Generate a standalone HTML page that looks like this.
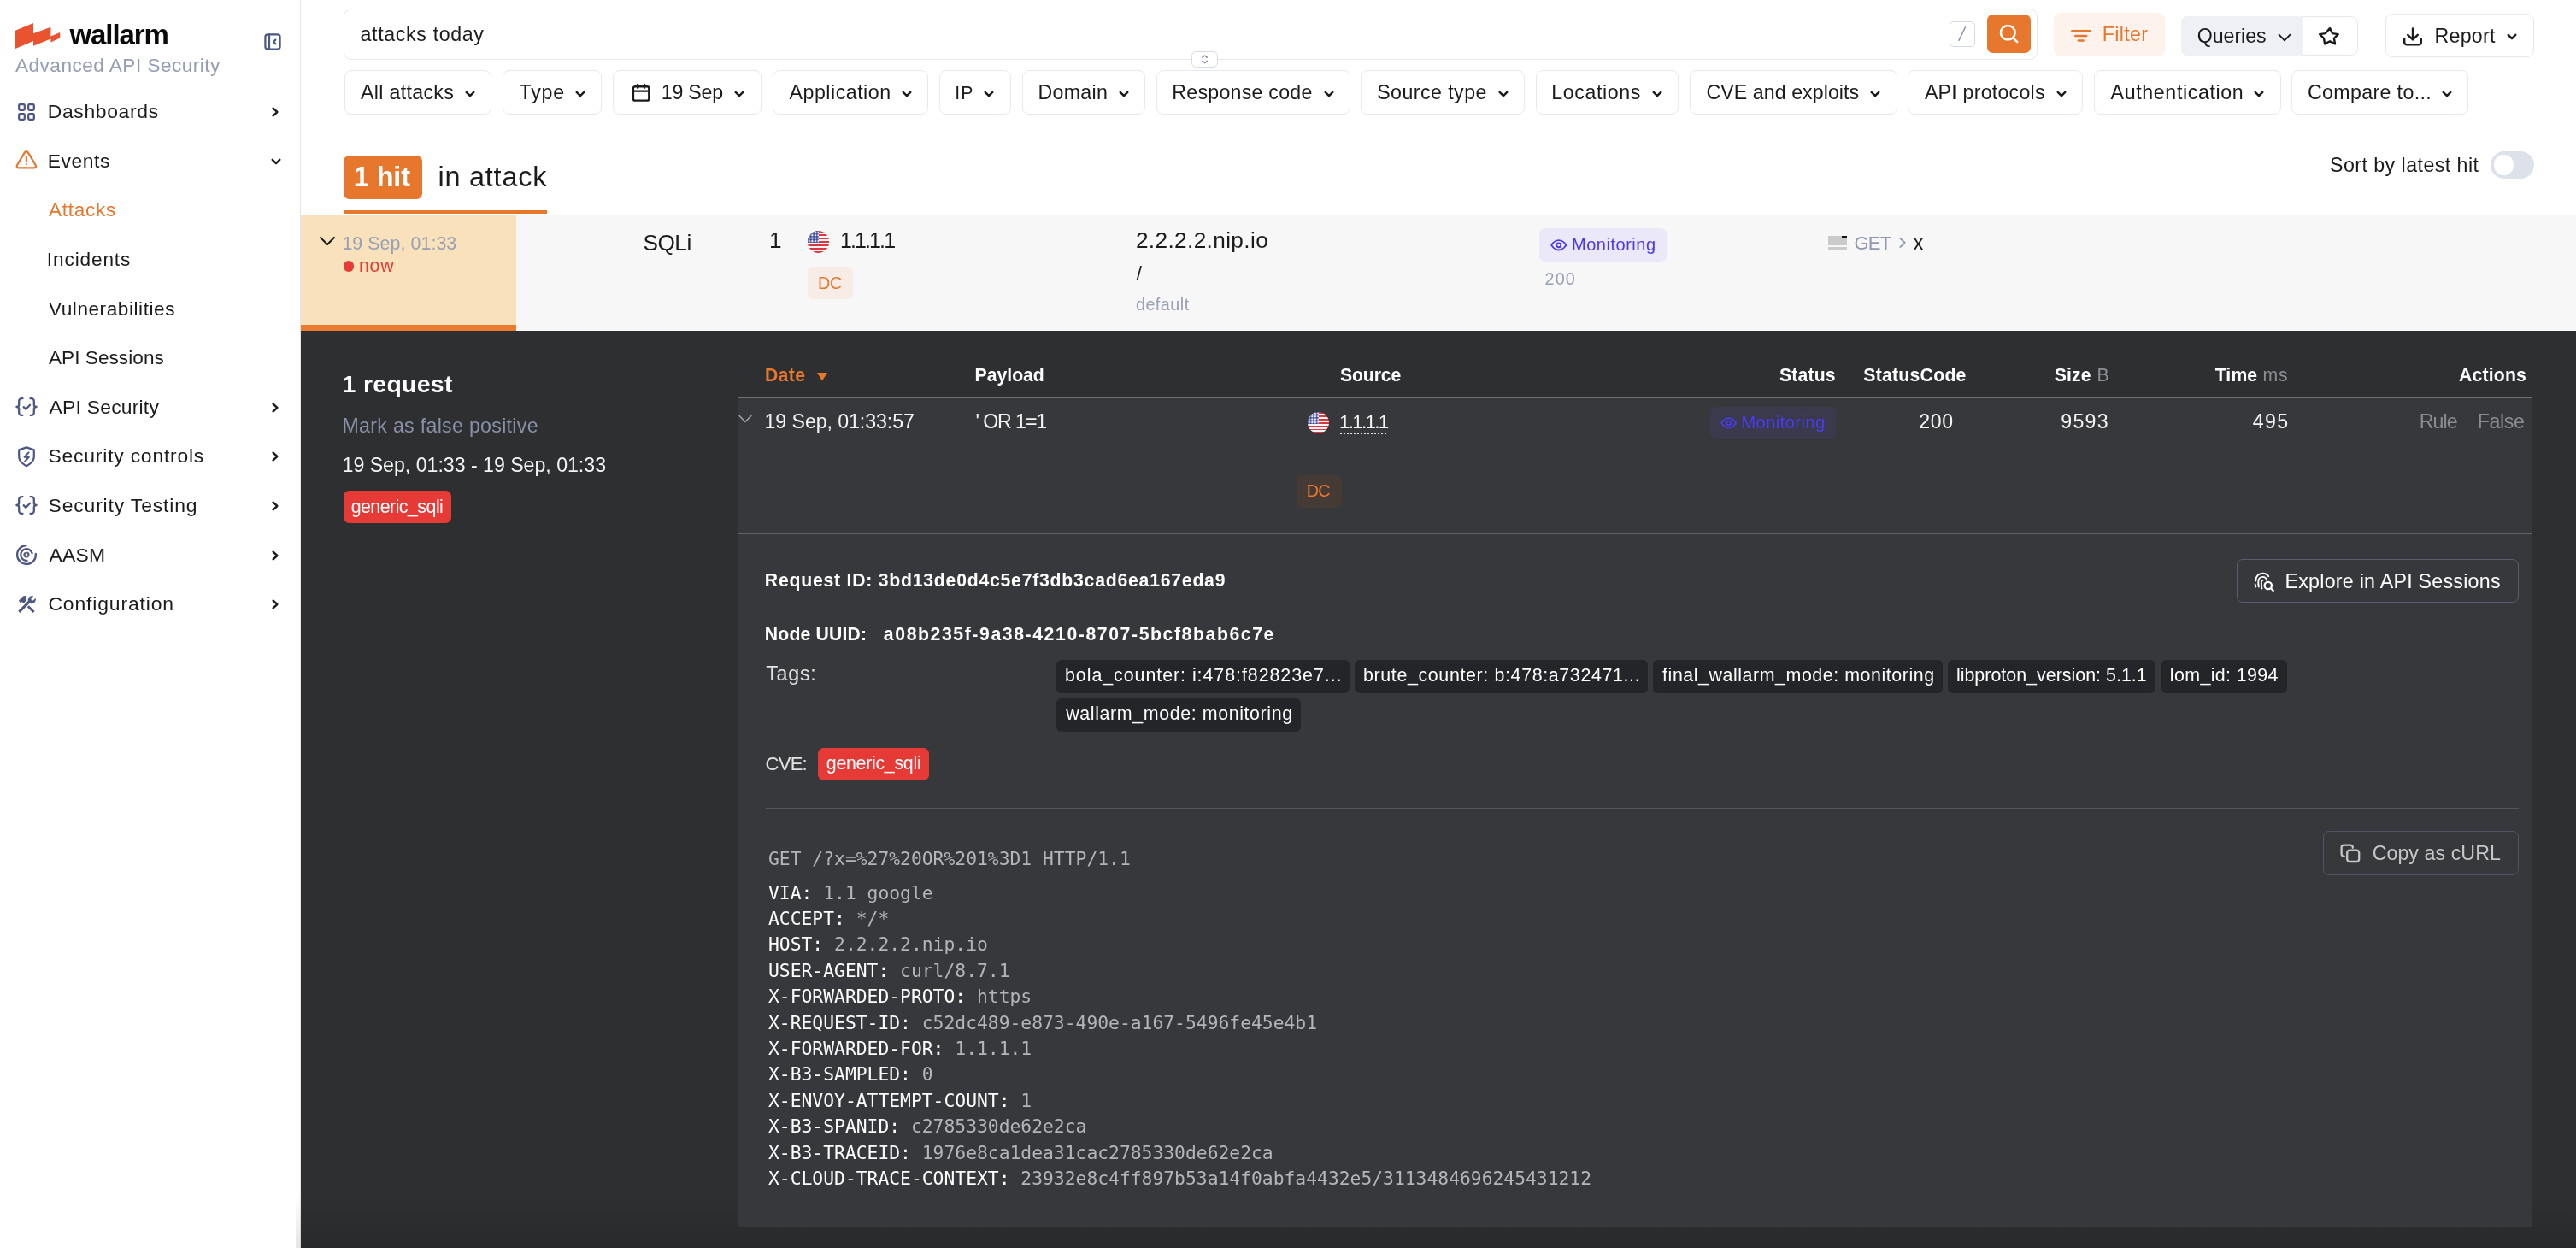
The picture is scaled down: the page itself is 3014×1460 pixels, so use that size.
<!DOCTYPE html>
<html lang="en">
<head>
<meta charset="utf-8">
<title>Wallarm - Attacks</title>
<style>
*{box-sizing:border-box;margin:0;padding:0}
html,body{width:3014px;height:1460px;overflow:hidden;background:#fff}
body{font-family:"Liberation Sans",sans-serif;color:#1d1d1f;position:relative}
#app{position:absolute;left:0;top:0;width:3014px;height:1460px;overflow:hidden;will-change:transform}
.a{position:absolute}
.t{position:absolute;white-space:nowrap}
svg{position:absolute;overflow:visible}
.ic{fill:none;stroke-linecap:round;stroke-linejoin:round}
.mono{font-family:"DejaVu Sans Mono","Liberation Mono",monospace}
</style>
</head>
<body>
<div id="app">
<!-- b_side -->
<div class="a" style="left:0.00px;top:0.00px;width:352.00px;height:1460.00px;background:#fff;border-right:1px solid #e4e5ea;"></div>
<svg style="left:0.00px;top:0.00px;" width="80.00" height="70.00" viewBox="0 0 80 70"><path fill="#e9532f" d="M18 35.8L39 27V39.2L59.4 31.7V42.6L70.2 37.9V44.6L59.4 49.4V45.6L39 53.8V48L18 56.9Z"/></svg>
<div class="t " style="top:22px;font-size:33.00px;line-height:37px;left:81.50px;letter-spacing:-1.102px;color:#0a0a0a;font-weight:bold;">wallarm</div>
<div class="t " style="top:64px;font-size:22.60px;line-height:25px;left:18.00px;letter-spacing:0.477px;color:#959db3;">Advanced API Security</div>
<svg style="left:308.00px;top:38.00px;" width="22.00" height="22.00" viewBox="0 0 22 22"><rect class="ic" x="2.4" y="2.4" width="17.2" height="17.2" rx="3" stroke="#4c5783" stroke-width="2.2"/><path class="ic" d="M7 2.4V19.6M14.4 8.6L12 11L14.4 13.4" stroke="#4c5783" stroke-width="2.2"/></svg>
<div class="t " style="top:117px;font-size:22.90px;line-height:26px;left:55.77px;letter-spacing:0.656px;color:#1b1b1d;">Dashboards</div>
<svg style="left:316.40px;top:123.10px;" width="12.00" height="16.00" viewBox="0 0 12 16"><path class="ic" d="M3.60 3.60L8.40 8L3.60 12.40" stroke="#1d1d1f" stroke-width="2.40"/></svg>
<div class="t " style="top:175px;font-size:22.90px;line-height:26px;left:55.77px;letter-spacing:0.535px;color:#1b1b1d;">Events</div>
<svg style="left:314.80px;top:182.50px;" width="16.00" height="12.00" viewBox="0 0 16 12"><path class="ic" d="M3.70 3.80L8 8.20L12.30 3.80" stroke="#1d1d1f" stroke-width="2.40"/></svg>
<div class="t " style="top:463px;font-size:22.90px;line-height:26px;left:57.60px;letter-spacing:0.214px;color:#1b1b1d;">API Security</div>
<svg style="left:316.40px;top:468.70px;" width="12.00" height="16.00" viewBox="0 0 12 16"><path class="ic" d="M3.60 3.60L8.40 8L3.60 12.40" stroke="#1d1d1f" stroke-width="2.40"/></svg>
<div class="t " style="top:520px;font-size:22.90px;line-height:26px;left:56.57px;letter-spacing:0.781px;color:#1b1b1d;">Security controls</div>
<svg style="left:316.40px;top:526.30px;" width="12.00" height="16.00" viewBox="0 0 12 16"><path class="ic" d="M3.60 3.60L8.40 8L3.60 12.40" stroke="#1d1d1f" stroke-width="2.40"/></svg>
<div class="t " style="top:578px;font-size:22.90px;line-height:26px;left:56.57px;letter-spacing:0.853px;color:#1b1b1d;">Security Testing</div>
<svg style="left:316.40px;top:583.90px;" width="12.00" height="16.00" viewBox="0 0 12 16"><path class="ic" d="M3.60 3.60L8.40 8L3.60 12.40" stroke="#1d1d1f" stroke-width="2.40"/></svg>
<div class="t " style="top:636px;font-size:22.90px;line-height:26px;left:57.60px;letter-spacing:0.170px;color:#1b1b1d;">AASM</div>
<svg style="left:316.40px;top:641.50px;" width="12.00" height="16.00" viewBox="0 0 12 16"><path class="ic" d="M3.60 3.60L8.40 8L3.60 12.40" stroke="#1d1d1f" stroke-width="2.40"/></svg>
<div class="t " style="top:693px;font-size:22.90px;line-height:26px;left:56.45px;letter-spacing:0.865px;color:#1b1b1d;">Configuration</div>
<svg style="left:316.40px;top:699.10px;" width="12.00" height="16.00" viewBox="0 0 12 16"><path class="ic" d="M3.60 3.60L8.40 8L3.60 12.40" stroke="#1d1d1f" stroke-width="2.40"/></svg>
<div class="t " style="top:233px;font-size:22.60px;line-height:25px;left:56.90px;letter-spacing:0.727px;color:#e8762d;">Attacks</div>
<div class="t " style="top:291px;font-size:22.60px;line-height:25px;left:54.87px;letter-spacing:0.876px;color:#1b1b1d;">Incidents</div>
<div class="t " style="top:349px;font-size:22.60px;line-height:25px;left:56.90px;letter-spacing:0.557px;color:#1b1b1d;">Vulnerabilities</div>
<div class="t " style="top:406px;font-size:22.60px;line-height:25px;left:56.90px;letter-spacing:0.049px;color:#1b1b1d;">API Sessions</div>
<svg style="left:20.00px;top:120.00px;" width="22.00" height="22.00" viewBox="0 0 22 22"><rect class="ic" x="2.2" y="2.2" width="6.6" height="6.6" rx="1.2" stroke="#4c5783" stroke-width="2.3"/><rect class="ic" x="2.2" y="13.2" width="6.6" height="6.6" rx="1.2" stroke="#4c5783" stroke-width="2.3"/><rect class="ic" x="13.2" y="2.2" width="6.6" height="6.6" rx="1.2" stroke="#4c5783" stroke-width="2.3"/><rect class="ic" x="13.2" y="13.2" width="6.6" height="6.6" rx="1.2" stroke="#4c5783" stroke-width="2.3"/></svg>
<svg style="left:18.00px;top:174.00px;" width="25.70" height="25.70" viewBox="0 0 24 24"><g class="ic" stroke="#e8762d" stroke-width="2.1"><path d="M10.29 3.86L1.82 18a2 2 0 0 0 1.71 3h16.94a2 2 0 0 0 1.71-3L13.71 3.86a2 2 0 0 0-3.42 0z"/><path d="M12 9v4.4M12 17h.01"/></g></svg>
<svg style="left:17.00px;top:463.60px;" width="28.00" height="24.00" viewBox="0 0 28 24"><g class="ic" stroke="#4c5783" stroke-width="2.3"><path d="M9.5 2.2H8.2a3 3 0 0 0-3 3v4.2c0 1.6-1 2.6-2.8 2.6 1.8 0 2.8 1 2.8 2.6v4.2a3 3 0 0 0 3 3h1.3"/><path d="M18.5 2.2h1.3a3 3 0 0 1 3 3v4.2c0 1.6 1 2.6 2.8 2.6-1.800 0-2.8 1-2.8 2.600v4.2a3 3 0 0 1-3 3h-1.300"/><path d="M10.600 12.200l2.700 2.600 4.800-5"/></g></svg>
<svg style="left:17.00px;top:578.80px;" width="28.00" height="24.00" viewBox="0 0 28 24"><g class="ic" stroke="#4c5783" stroke-width="2.3"><path d="M9.5 2.2H8.2a3 3 0 0 0-3 3v4.2c0 1.6-1 2.6-2.8 2.6 1.8 0 2.8 1 2.8 2.6v4.2a3 3 0 0 0 3 3h1.3"/><path d="M18.5 2.2h1.3a3 3 0 0 1 3 3v4.2c0 1.6 1 2.6 2.8 2.6-1.800 0-2.8 1-2.8 2.600v4.2a3 3 0 0 1-3 3h-1.300"/><path d="M10.600 12.200l2.700 2.600 4.800-5"/></g></svg>
<svg style="left:19.00px;top:520.50px;" width="24.00" height="26.00" viewBox="0 0 24 26"><g class="ic" stroke="#4c5783" stroke-width="2.2"><path d="M12 24.200s8.800-4.300 8.800-11V5.400L12 2.400 3.200 5.400v7.800c0 6.700 8.800 11 8.800 11z"/><path d="M14.600 8.400l-5 5.400h5.200l-4.600 5" stroke-width="2"/></g></svg>
<svg style="left:17.20px;top:634.90px;" width="28.00" height="28.00" viewBox="-14 -14 28 28"><g class="ic" stroke="#4c5783" stroke-width="2.3"><path d="M10.800 -1.200A10.900 10.900 0 1 1 -0.500 -10.800"/><path d="M0.5 6.800A6.800 6.800 0 1 1 6.600 -1.800"/><path d="M-1.800 -1.800A2.500 2.500 0 1 0 1.200 -2.200"/></g></svg>
<svg style="left:20.00px;top:696.00px;" width="22.00" height="22.00" viewBox="0 0 22 22"><g fill="#4c5783" stroke="none"><path d="M1.200 18.800L13.200 6.800 15.400 9 3.400 21z"/><path d="M13.800 12.200l6.800 6.800-2 2-6.800-6.800z"/><path d="M2 6.600l4.400-4.600c1.600-1.200 3.800-1 4.800-.4l-1.600 1.800 1 3.400-2.600 2.600-3.200-1.400-1.200 1.200z"/><path d="M14.200 2.600c1.400-1.400 3.400-1.800 5-1.200l-2.800 2.800.4 2 2 .4 2.800-2.800c.6 1.600.2 3.600-1.200 5s-3.400 1.800-5 1.200l-2.400-2.400c-.6-1.600-.2-3.600 1.200-5z"/></g></svg>
<!-- b_top -->
<div class="a" style="left:402.00px;top:10.00px;width:1982.00px;height:59.50px;background:#fff;border:1px solid #e7e8ee;border-radius:9.0px;"></div>
<div class="t " style="top:27px;font-size:23.20px;line-height:26px;left:421.57px;letter-spacing:0.648px;color:#1b1b1d;">attacks today</div>
<div class="a" style="left:2281.00px;top:25.00px;width:29.60px;height:29.60px;background:#fff;border:1px solid #d3d9ea;border-radius:5.0px;"></div>
<svg style="left:2281.00px;top:25.00px;" width="30.00" height="30.00" viewBox="0 0 30 30"><path class="ic" d="M18.400 7L11 22.200" stroke="#8d95ad" stroke-width="1.6"/></svg>
<div class="a" style="left:2325.00px;top:17.00px;width:51.00px;height:44.80px;background:#e8772e;border-radius:6.5px;"></div>
<svg style="left:2337.00px;top:26.00px;" width="26.00" height="26.00" viewBox="0 0 26 26"><g class="ic" stroke="#fff" stroke-width="2.5"><circle cx="12.3" cy="12.300" r="8.300"/><path d="M18.400 18.400L23.200 23.200"/></g></svg>
<div class="a" style="left:1393.50px;top:60.00px;width:31.20px;height:18.60px;background:#fff;border:1px solid #d6dbeb;border-radius:5.5px;"></div>
<svg style="left:1393.50px;top:60.00px;" width="31.20" height="18.60" viewBox="0 0 31.2 18.6"><g class="ic" stroke="#6f7896" stroke-width="1.3"><path d="M12.800 7.200L15.600 5 18.400 7.200"/><path d="M12.800 11.400L15.600 13.600 18.400 11.400"/></g></svg>
<div class="a" style="left:2403.00px;top:15.00px;width:130.00px;height:50.60px;background:#fdf2ec;border-radius:8.0px;"></div>
<svg style="left:2420.00px;top:30.00px;" width="30.00" height="24.00" viewBox="0 0 30 24"><path class="ic" d="M4.300 6.300H25.200M8.200 12H21.300M11.800 17.500H17.600" stroke="#e8772e" stroke-width="2.400"/></svg>
<div class="t " style="top:27px;font-size:23.20px;line-height:26px;left:2459.74px;letter-spacing:0.357px;color:#e8772e;">Filter</div>
<div class="a" style="left:2552.00px;top:19.20px;width:207.00px;height:45.40px;background:#fff;border:1px solid #e7e8ef;border-radius:8.0px;"></div>
<div class="a" style="left:2552.00px;top:19.20px;width:142.60px;height:45.40px;background:#eef0f5;border-radius:7px 0 0 7px;"></div>
<div class="t " style="top:29px;font-size:23.20px;line-height:26px;left:2570.76px;letter-spacing:-0.057px;color:#1b1b1d;">Queries</div>
<svg style="left:2665.00px;top:38.40px;" width="16.00" height="12.00" viewBox="0 0 16 12"><path class="ic" d="M1.55 2.70L8 9.30L14.45 2.70" stroke="#1b1b1d" stroke-width="1.90"/></svg>
<svg style="left:2712.00px;top:30.00px;" width="28.00" height="27.00" viewBox="0 0 24 24"><path class="ic" d="M12 2.600l2.850 5.780 6.380.930-4.620 4.500 1.090 6.350L12 17.160l-5.700 3-1.090-6.350-4.620-4.500 6.380-.93z" transform="translate(0.900,0.300) scale(0.930)" stroke="#1b1b1d" stroke-width="2.300"/></svg>
<div class="a" style="left:2791.20px;top:16.10px;width:173.40px;height:51.30px;background:#fff;border:1px solid #e7e8ef;border-radius:8.0px;"></div>
<svg style="left:2810.00px;top:30.00px;" width="26.00" height="26.00" viewBox="0 0 26 26"><g class="ic" stroke="#1b1b1d" stroke-width="2.400"><path d="M3.200 15.600v4a2.600 2.600 0 0 0 2.600 2.600h14.400a2.600 2.600 0 0 0 2.600-2.600v-4"/><path d="M7.200 10.800L13 16.400l5.800-5.600M13 16V3.400"/></g></svg>
<div class="t " style="top:29px;font-size:23.20px;line-height:26px;left:2848.54px;letter-spacing:0.251px;color:#1b1b1d;">Report</div>
<svg style="left:2930.80px;top:37.40px;" width="16.00" height="12.00" viewBox="0 0 16 12"><path class="ic" d="M3.70 3.80L8 8.20L12.30 3.80" stroke="#1b1b1d" stroke-width="2.40"/></svg>
<div class="a" style="left:402.50px;top:82.00px;width:172.80px;height:51.50px;background:#fff;border:1px solid #e7e8f1;border-radius:8.0px;"></div>
<div class="t " style="top:95px;font-size:23.20px;line-height:26px;left:422.10px;letter-spacing:0.304px;color:#1b1b1d;">All attacks</div>
<svg style="left:542.00px;top:103.60px;" width="16.00" height="12.00" viewBox="0 0 16 12"><path class="ic" d="M3.70 3.80L8 8.20L12.30 3.80" stroke="#1b1b1d" stroke-width="2.40"/></svg>
<div class="a" style="left:588.40px;top:82.00px;width:116.00px;height:51.50px;background:#fff;border:1px solid #e7e8f1;border-radius:8.0px;"></div>
<div class="t " style="top:95px;font-size:23.20px;line-height:26px;left:607.54px;letter-spacing:0.755px;color:#1b1b1d;">Type</div>
<svg style="left:671.10px;top:103.60px;" width="16.00" height="12.00" viewBox="0 0 16 12"><path class="ic" d="M3.70 3.80L8 8.20L12.30 3.80" stroke="#1b1b1d" stroke-width="2.40"/></svg>
<div class="a" style="left:717.40px;top:82.00px;width:173.20px;height:51.50px;background:#fff;border:1px solid #e7e8f1;border-radius:8.0px;"></div>
<svg style="left:737.50px;top:96.00px;" width="24.00" height="24.00" viewBox="0 0 24 24"><g class="ic" stroke="#1b1b1d" stroke-width="2.400"><rect x="2.900" y="5.200" width="18.400" height="16.400" rx="2.200"/><path d="M2.900 10.600H21.300M8.200 2.900V6.800M16 2.900V6.800"/></g></svg>
<div class="t " style="top:95px;font-size:23.20px;line-height:26px;left:773.76px;letter-spacing:-0.215px;color:#1b1b1d;">19 Sep</div>
<svg style="left:857.30px;top:103.60px;" width="16.00" height="12.00" viewBox="0 0 16 12"><path class="ic" d="M3.70 3.80L8 8.20L12.30 3.80" stroke="#1b1b1d" stroke-width="2.40"/></svg>
<div class="a" style="left:904.00px;top:82.00px;width:182.00px;height:51.50px;background:#fff;border:1px solid #e7e8f1;border-radius:8.0px;"></div>
<div class="t " style="top:95px;font-size:23.20px;line-height:26px;left:923.60px;letter-spacing:0.504px;color:#1b1b1d;">Application</div>
<svg style="left:1052.70px;top:103.60px;" width="16.00" height="12.00" viewBox="0 0 16 12"><path class="ic" d="M3.70 3.80L8 8.20L12.30 3.80" stroke="#1b1b1d" stroke-width="2.40"/></svg>
<div class="a" style="left:1099.00px;top:82.00px;width:83.60px;height:51.50px;background:#fff;border:1px solid #e7e8f1;border-radius:8.0px;"></div>
<div class="t " style="top:97px;font-size:21.20px;line-height:23px;left:1117.29px;letter-spacing:1.034px;color:#1b1b1d;">IP</div>
<svg style="left:1149.30px;top:103.60px;" width="16.00" height="12.00" viewBox="0 0 16 12"><path class="ic" d="M3.70 3.80L8 8.20L12.30 3.80" stroke="#1b1b1d" stroke-width="2.40"/></svg>
<div class="a" style="left:1196.20px;top:82.00px;width:143.60px;height:51.50px;background:#fff;border:1px solid #e7e8f1;border-radius:8.0px;"></div>
<div class="t " style="top:95px;font-size:23.20px;line-height:26px;left:1214.54px;letter-spacing:0.285px;color:#1b1b1d;">Domain</div>
<svg style="left:1306.50px;top:103.60px;" width="16.00" height="12.00" viewBox="0 0 16 12"><path class="ic" d="M3.70 3.80L8 8.20L12.30 3.80" stroke="#1b1b1d" stroke-width="2.40"/></svg>
<div class="a" style="left:1353.00px;top:82.00px;width:226.80px;height:51.50px;background:#fff;border:1px solid #e7e8f1;border-radius:8.0px;"></div>
<div class="t " style="top:95px;font-size:23.20px;line-height:26px;left:1371.34px;letter-spacing:0.237px;color:#1b1b1d;">Response code</div>
<svg style="left:1546.50px;top:103.60px;" width="16.00" height="12.00" viewBox="0 0 16 12"><path class="ic" d="M3.70 3.80L8 8.20L12.30 3.80" stroke="#1b1b1d" stroke-width="2.40"/></svg>
<div class="a" style="left:1592.00px;top:82.00px;width:191.80px;height:51.50px;background:#fff;border:1px solid #e7e8f1;border-radius:8.0px;"></div>
<div class="t " style="top:95px;font-size:23.20px;line-height:26px;left:1611.16px;letter-spacing:0.450px;color:#1b1b1d;">Source type</div>
<svg style="left:1750.50px;top:103.60px;" width="16.00" height="12.00" viewBox="0 0 16 12"><path class="ic" d="M3.70 3.80L8 8.20L12.30 3.80" stroke="#1b1b1d" stroke-width="2.40"/></svg>
<div class="a" style="left:1797.00px;top:82.00px;width:166.80px;height:51.50px;background:#fff;border:1px solid #e7e8f1;border-radius:8.0px;"></div>
<div class="t " style="top:95px;font-size:23.20px;line-height:26px;left:1815.34px;letter-spacing:0.584px;color:#1b1b1d;">Locations</div>
<svg style="left:1930.50px;top:103.60px;" width="16.00" height="12.00" viewBox="0 0 16 12"><path class="ic" d="M3.70 3.80L8 8.20L12.30 3.80" stroke="#1b1b1d" stroke-width="2.40"/></svg>
<div class="a" style="left:1977.40px;top:82.00px;width:242.30px;height:51.50px;background:#fff;border:1px solid #e7e8f1;border-radius:8.0px;"></div>
<div class="t " style="top:95px;font-size:23.20px;line-height:26px;left:1996.44px;letter-spacing:0.055px;color:#1b1b1d;">CVE and exploits</div>
<svg style="left:2186.40px;top:103.60px;" width="16.00" height="12.00" viewBox="0 0 16 12"><path class="ic" d="M3.70 3.80L8 8.20L12.30 3.80" stroke="#1b1b1d" stroke-width="2.40"/></svg>
<div class="a" style="left:2232.30px;top:82.00px;width:204.70px;height:51.50px;background:#fff;border:1px solid #e7e8f1;border-radius:8.0px;"></div>
<div class="t " style="top:95px;font-size:23.20px;line-height:26px;left:2251.90px;letter-spacing:0.224px;color:#1b1b1d;">API protocols</div>
<svg style="left:2403.70px;top:103.60px;" width="16.00" height="12.00" viewBox="0 0 16 12"><path class="ic" d="M3.70 3.80L8 8.20L12.30 3.80" stroke="#1b1b1d" stroke-width="2.40"/></svg>
<div class="a" style="left:2450.00px;top:82.00px;width:218.70px;height:51.50px;background:#fff;border:1px solid #e7e8f1;border-radius:8.0px;"></div>
<div class="t " style="top:95px;font-size:23.20px;line-height:26px;left:2469.60px;letter-spacing:0.632px;color:#1b1b1d;">Authentication</div>
<svg style="left:2635.40px;top:103.60px;" width="16.00" height="12.00" viewBox="0 0 16 12"><path class="ic" d="M3.70 3.80L8 8.20L12.30 3.80" stroke="#1b1b1d" stroke-width="2.40"/></svg>
<div class="a" style="left:2681.00px;top:82.00px;width:207.00px;height:51.50px;background:#fff;border:1px solid #e7e8f1;border-radius:8.0px;"></div>
<div class="t " style="top:95px;font-size:23.20px;line-height:26px;left:2700.04px;letter-spacing:0.346px;color:#1b1b1d;">Compare to...</div>
<svg style="left:2854.70px;top:103.60px;" width="16.00" height="12.00" viewBox="0 0 16 12"><path class="ic" d="M3.70 3.80L8 8.20L12.30 3.80" stroke="#1b1b1d" stroke-width="2.40"/></svg>
<div class="a" style="left:401.80px;top:182.00px;width:92.40px;height:51.00px;background:#e8772e;border-radius:6.5px;"></div>
<div class="t " style="top:189px;font-size:32.40px;line-height:36px;left:413.86px;letter-spacing:-0.119px;color:#fff;font-weight:bold;">1 hit</div>
<div class="t " style="top:189px;font-size:32.40px;line-height:36px;left:512.49px;letter-spacing:0.782px;color:#1b1b1d;">in attack</div>
<div class="a" style="left:401.80px;top:245.80px;width:238.20px;height:4.60px;background:#e8772e;"></div>
<div class="t " style="top:180px;font-size:23.20px;line-height:26px;left:2725.96px;letter-spacing:0.460px;color:#1b1b1d;">Sort by latest hit</div>
<div class="a" style="left:2914.00px;top:177.00px;width:51.00px;height:32.00px;background:#dde1ea;border-radius:16.0px;"></div>
<div class="a" style="left:2917.80px;top:181.40px;width:23.20px;height:23.20px;background:#fff;border-radius:12.0px;"></div>
<!-- b_row -->
<div class="a" style="left:352.00px;top:251.00px;width:2662.00px;height:135.00px;background:#f7f7f7;"></div>
<div class="a" style="left:352.00px;top:251.00px;width:252.00px;height:136.00px;background:#f9e2bb;"></div>
<div class="a" style="left:352.00px;top:380.00px;width:252.00px;height:7.00px;background:#ea7b30;"></div>
<svg style="left:374.50px;top:275.80px;" width="16.00" height="12.00" viewBox="0 0 16 12"><path class="ic" d="M0.04 1.93L8 10.07L15.96 1.93" stroke="#1b1b1d" stroke-width="2.00"/></svg>
<div class="t " style="top:273px;font-size:21.40px;line-height:24px;left:400.39px;letter-spacing:0.054px;color:#98a0b5;">19 Sep, 01:33</div>
<div class="a" style="left:402.00px;top:305.40px;width:12.20px;height:12.20px;background:#e53a35;border-radius:6.1px;"></div>
<div class="t " style="top:299px;font-size:21.40px;line-height:24px;left:420.01px;letter-spacing:0.711px;color:#e53a35;">now</div>
<div class="t " style="top:269px;font-size:26.20px;line-height:30px;left:752.52px;letter-spacing:-0.494px;color:#1b1b1d;">SQLi</div>
<div class="t " style="top:266px;font-size:26.20px;line-height:30px;left:900.03px;color:#1b1b1d;">1</div>
<div class="a" style="left:944.70px;top:270.20px;width:25.60px;height:25.60px;border-radius:50%;overflow:hidden;background:repeating-linear-gradient(180deg,#d9363e 0,#d9363e 1.969px,#f4f4f6 1.969px,#f4f4f6 3.938px)"><div class="a" style="left:0;top:0;width:13.06px;height:13.78px;background:radial-gradient(circle,rgba(255,255,255,.9) 0,rgba(255,255,255,.9) 0.96px,transparent 1.56px),#3f4c9c;background-size:3.58px 3.46px,auto"></div></div>
<div class="t " style="top:267px;font-size:25.00px;line-height:28px;left:983.02px;letter-spacing:-1.900px;color:#1b1b1d;">1.1.1.1</div>
<div class="a" style="left:945.00px;top:312.00px;width:53.00px;height:37.60px;background:#f9ebe5;border-radius:6.5px;"></div>
<div class="t " style="top:320px;font-size:19.80px;line-height:22px;left:957.02px;letter-spacing:-0.235px;color:#e8772e;">DC</div>
<div class="t " style="top:266px;font-size:26.20px;line-height:30px;left:1328.89px;letter-spacing:0.374px;color:#1b1b1d;">2.2.2.2.nip.io</div>
<div class="t " style="top:307px;font-size:23.20px;line-height:26px;left:1329.40px;color:#1b1b1d;">/</div>
<div class="t " style="top:345px;font-size:19.80px;line-height:22px;left:1328.91px;letter-spacing:0.482px;color:#98a0b5;">default</div>
<div class="a" style="left:1801.00px;top:267.00px;width:149.00px;height:39.00px;background:#ebe8f9;border-radius:7.0px;"></div>
<svg style="left:1813.60px;top:276.60px;" width="19.60" height="19.60" viewBox="0 0 24 24"><g class="ic" stroke="#4a38ee" stroke-width="2.200"><path d="M1.500 12s3.800-7 10.500-7 10.500 7 10.500 7-3.800 7-10.500 7S1.500 12 1.500 12z"/><circle cx="12" cy="12" r="3"/></g></svg>
<div class="t " style="top:275px;font-size:20.00px;line-height:22px;left:1839.00px;letter-spacing:0.522px;color:#4a38ee;">Monitoring</div>
<div class="t " style="top:315px;font-size:19.80px;line-height:22px;left:1807.51px;letter-spacing:1.158px;color:#98a0b5;">200</div>
<div class="a" style="left:2139.00px;top:276.00px;width:22.40px;height:10.80px;background:#cacaca;"></div>
<div class="a" style="left:2139.00px;top:289.00px;width:22.40px;height:3.00px;background:#cacaca;"></div>
<div class="a" style="left:2155.00px;top:276.00px;width:6.40px;height:3.00px;background:#111;"></div>
<div class="t " style="top:272px;font-size:22.00px;line-height:25px;left:2169.40px;letter-spacing:-0.685px;color:#8f98ae;">GET</div>
<svg style="left:2220.30px;top:276.20px;" width="12.00" height="16.00" viewBox="0 0 12 16"><path class="ic" d="M3.24 2.94L8.76 8L3.24 13.06" stroke="#8f98ae" stroke-width="1.80"/></svg>
<div class="t " style="top:271px;font-size:23.20px;line-height:26px;left:2238.77px;color:#1b1b1d;">x</div>
<!-- b_dark -->
<div class="a" style="left:352.00px;top:387.00px;width:2662.00px;height:1073.00px;background:#2e2f31;"></div>
<div class="a" style="left:352.00px;top:1396.00px;width:2662.00px;height:64.00px;background:linear-gradient(180deg,rgba(0,0,0,0) 0%,rgba(0,0,0,.05) 55%,rgba(0,0,0,.13) 100%);"></div>
<div class="a" style="left:346.00px;top:1396.00px;width:6.00px;height:64.00px;background:linear-gradient(180deg,rgba(0,0,0,0) 0%,rgba(0,0,0,.10) 100%);"></div>
<div class="a" style="left:864.00px;top:465.60px;width:2098.80px;height:970.40px;background:#37383b;"></div>
<div class="t " style="top:433px;font-size:28.40px;line-height:32px;left:400.60px;letter-spacing:0.326px;color:#ffffff;font-weight:bold;">1 request</div>
<div class="t " style="top:485px;font-size:23.20px;line-height:26px;left:400.44px;letter-spacing:0.296px;color:#8790a6;">Mark as false positive</div>
<div class="t " style="top:531px;font-size:23.20px;line-height:26px;left:400.56px;letter-spacing:-0.033px;color:#f4f4f4;">19 Sep, 01:33 - 19 Sep, 01:33</div>
<div class="a" style="left:402.00px;top:574.00px;width:126.00px;height:37.80px;background:#e53a35;border-radius:6.5px;"></div>
<div class="t " style="top:581px;font-size:21.40px;line-height:24px;left:410.64px;letter-spacing:-0.538px;color:#ffffff;">generic_sqli</div>
<div class="t " style="top:427px;font-size:21.20px;line-height:23px;left:894.92px;letter-spacing:0.372px;color:#e8772e;font-weight:bold;">Date</div>
<svg style="left:955.80px;top:436.20px;" width="12.00" height="10.00" viewBox="0 0 12 10"><path d="M0 0H12L6 9.600Z" fill="#e8772e"/></svg>
<div class="t " style="top:427px;font-size:21.20px;line-height:23px;left:1140.62px;letter-spacing:-0.008px;color:#ffffff;font-weight:bold;">Payload</div>
<div class="t " style="top:427px;font-size:21.20px;line-height:23px;left:1568.07px;letter-spacing:-0.140px;color:#ffffff;font-weight:bold;">Source</div>
<div class="t " style="top:427px;font-size:21.20px;line-height:23px;left:2081.97px;letter-spacing:0.181px;color:#ffffff;font-weight:bold;">Status</div>
<div class="t " style="top:427px;font-size:21.20px;line-height:23px;left:2180.27px;letter-spacing:0.267px;color:#ffffff;font-weight:bold;">StatusCode</div>
<div class="t " style="top:427px;font-size:21.20px;line-height:23px;left:2403.87px;letter-spacing:0.122px;color:#ffffff;font-weight:bold;">Size</div>
<div class="t " style="top:427px;font-size:21.20px;line-height:23px;left:2453.60px;color:#8d8e92;">B</div>
<div class="t " style="top:427px;font-size:21.20px;line-height:23px;left:2591.69px;letter-spacing:0.123px;color:#ffffff;font-weight:bold;">Time</div>
<div class="t " style="top:427px;font-size:21.20px;line-height:23px;left:2647.62px;letter-spacing:0.818px;color:#8d8e92;">ms</div>
<div class="t " style="top:427px;font-size:21.20px;line-height:23px;left:2876.97px;letter-spacing:0.196px;color:#ffffff;font-weight:bold;">Actions</div>
<div class="a" style="left:2404.00px;top:451.00px;width:63.00px;height:1.00px;background:repeating-linear-gradient(90deg,#dcdcdc 0 4px,transparent 4px 6px);"></div>
<div class="a" style="left:2591.00px;top:451.00px;width:86.00px;height:1.00px;background:repeating-linear-gradient(90deg,#dcdcdc 0 4px,transparent 4px 6px);"></div>
<div class="a" style="left:2877.00px;top:451.00px;width:78.00px;height:1.00px;background:repeating-linear-gradient(90deg,#dcdcdc 0 4px,transparent 4px 6px);"></div>
<div class="a" style="left:864.00px;top:465.00px;width:2098.80px;height:1.20px;background:#717275;"></div>
<svg style="left:864.20px;top:484.20px;" width="16.00" height="12.00" viewBox="0 0 16 12"><path class="ic" d="M1.12 2.48L8 9.52L14.88 2.48" stroke="#a3a4a8" stroke-width="1.50"/></svg>
<div class="t " style="top:480px;font-size:23.20px;line-height:26px;left:894.56px;letter-spacing:-0.086px;color:#f4f4f4;">19 Sep, 01:33:57</div>
<div class="t " style="top:480px;font-size:23.20px;line-height:26px;left:1141.44px;letter-spacing:-1.086px;color:#f4f4f4;">' OR 1=1</div>
<div class="a" style="left:1529.70px;top:482.10px;width:25.40px;height:25.40px;border-radius:50%;overflow:hidden;background:repeating-linear-gradient(180deg,#d9363e 0,#d9363e 1.954px,#f4f4f6 1.954px,#f4f4f6 3.908px)"><div class="a" style="left:0;top:0;width:12.95px;height:13.68px;background:radial-gradient(circle,rgba(255,255,255,.9) 0,rgba(255,255,255,.9) 0.95px,transparent 1.55px),#3f4c9c;background-size:3.56px 3.43px,auto"></div></div>
<div class="t " style="top:481px;font-size:22.40px;line-height:25px;left:1566.92px;letter-spacing:-1.700px;color:#f4f4f4;">1.1.1.1</div>
<div class="a" style="left:1568.00px;top:506.00px;width:54.00px;height:2.00px;background:repeating-linear-gradient(90deg,#e6e6e6 0 2px,transparent 2px 4px);"></div>
<div class="a" style="left:1517.20px;top:555.80px;width:52.80px;height:38.00px;background:#463a35;border-radius:6.0px;"></div>
<div class="t " style="top:563px;font-size:19.80px;line-height:22px;left:1528.72px;letter-spacing:-0.635px;color:#e8772e;">DC</div>
<div class="a" style="left:2000.50px;top:476.00px;width:147.40px;height:37.40px;background:#3b394c;border-radius:6.0px;"></div>
<svg style="left:2013.00px;top:484.60px;" width="19.40" height="19.40" viewBox="0 0 24 24"><g class="ic" stroke="#4a3cf5" stroke-width="2.200"><path d="M1.500 12s3.800-7 10.500-7 10.500 7 10.500 7-3.800 7-10.500 7S1.500 12 1.500 12z"/><circle cx="12" cy="12" r="3"/></g></svg>
<div class="t " style="top:483px;font-size:20.00px;line-height:22px;left:2037.40px;letter-spacing:0.489px;color:#4a3cf5;">Monitoring</div>
<div class="t " style="top:480px;font-size:23.20px;line-height:26px;left:2245.24px;letter-spacing:0.672px;color:#f4f4f4;">200</div>
<div class="t " style="top:480px;font-size:23.20px;line-height:26px;left:2411.26px;letter-spacing:1.251px;color:#f4f4f4;">9593</div>
<div class="t " style="top:480px;font-size:23.20px;line-height:26px;left:2635.84px;letter-spacing:1.282px;color:#f4f4f4;">495</div>
<div class="t " style="top:480px;font-size:23.20px;line-height:26px;left:2830.84px;letter-spacing:-0.964px;color:#8b8c90;">Rule</div>
<div class="t " style="top:480px;font-size:23.20px;line-height:26px;left:2898.84px;letter-spacing:-0.435px;color:#8b8c90;">False</div>
<div class="a" style="left:864.00px;top:623.60px;width:2098.80px;height:1.20px;background:#616266;"></div>
<div class="t " style="top:667px;font-size:21.20px;line-height:23px;left:894.82px;letter-spacing:0.777px;color:#ffffff;font-weight:bold;">Request ID: 3bd13de0d4c5e7f3db3cad6ea167eda9</div>
<div class="t " style="top:730px;font-size:21.20px;line-height:23px;left:894.82px;letter-spacing:0.181px;color:#ffffff;font-weight:bold;">Node UUID:</div>
<div class="t " style="top:730px;font-size:21.20px;line-height:23px;left:1033.87px;letter-spacing:1.602px;color:#ffffff;font-weight:bold;">a08b235f-9a38-4210-8707-5bcf8bab6c7e</div>
<div class="t " style="top:775px;font-size:23.20px;line-height:26px;left:896.24px;letter-spacing:0.776px;color:#e2e2e2;">Tags:</div>
<div class="a" style="left:1236.00px;top:772.00px;width:342.50px;height:38.60px;background:#242528;border-radius:6.0px;"></div>
<div class="t " style="top:778px;font-size:21.40px;line-height:24px;left:1246.02px;letter-spacing:0.950px;color:#ffffff;">bola_counter: i:478:f82823e7...</div>
<div class="a" style="left:1585.00px;top:772.00px;width:342.70px;height:38.60px;background:#242528;border-radius:6.0px;"></div>
<div class="t " style="top:778px;font-size:21.40px;line-height:24px;left:1595.02px;letter-spacing:0.639px;color:#ffffff;">brute_counter: b:478:a732471...</div>
<div class="a" style="left:1934.00px;top:772.00px;width:338.70px;height:38.60px;background:#242528;border-radius:6.0px;"></div>
<div class="t " style="top:778px;font-size:21.40px;line-height:24px;left:1945.09px;letter-spacing:0.553px;color:#ffffff;">final_wallarm_mode: monitoring</div>
<div class="a" style="left:2279.00px;top:772.00px;width:242.60px;height:38.60px;background:#242528;border-radius:6.0px;"></div>
<div class="t " style="top:778px;font-size:21.40px;line-height:24px;left:2288.91px;letter-spacing:0.017px;color:#ffffff;">libproton_version: 5.1.1</div>
<div class="a" style="left:2528.90px;top:772.00px;width:146.80px;height:38.60px;background:#242528;border-radius:6.0px;"></div>
<div class="t " style="top:778px;font-size:21.40px;line-height:24px;left:2538.81px;letter-spacing:0.374px;color:#ffffff;">lom_id: 1994</div>
<div class="a" style="left:1236.00px;top:817.40px;width:285.80px;height:38.60px;background:#242528;border-radius:6.0px;"></div>
<div class="t " style="top:823px;font-size:21.40px;line-height:24px;left:1247.30px;letter-spacing:0.607px;color:#ffffff;">wallarm_mode: monitoring</div>
<div class="t " style="top:881px;font-size:22.00px;line-height:25px;left:895.60px;letter-spacing:-0.763px;color:#e2e2e2;">CVE:</div>
<div class="a" style="left:957.00px;top:875.00px;width:130.00px;height:38.00px;background:#e53a35;border-radius:6.5px;"></div>
<div class="t " style="top:881px;font-size:21.40px;line-height:24px;left:966.84px;letter-spacing:-0.302px;color:#ffffff;">generic_sqli</div>
<div class="a" style="left:896.00px;top:945.20px;width:2051.00px;height:1.60px;background:#55565b;"></div>
<div class="a" style="left:2617.00px;top:654.00px;width:330.40px;height:50.60px;border:1px solid #575c72;border-radius:7.0px;"></div>
<svg style="left:2636.00px;top:667.00px;" width="26.00" height="26.00" viewBox="0 0 26 26"><g class="ic" stroke="#fff" stroke-width="1.900"><path d="M3.200 12.500c0-5 3.400-8.800 8.200-8.800 3 0 5.400 1.300 6.900 3.600"/><path d="M6.800 19.500c-.5-2-.6-4.200-.5-6.200.2-3 2.200-5.400 5.100-5.400 2.400 0 4.200 1.600 4.800 3.800"/><path d="M10.400 21.500c-.6-2.700-.7-5.400-.5-8.100.1-1 .7-1.700 1.600-1.700"/><path d="M2.700 16.500c.1 1 .3 2 .6 3"/><circle cx="17.800" cy="18" r="4.200" stroke-width="2.300"/><path d="M21 21.200l2.800 2.800" stroke-width="2.300"/></g></svg>
<div class="t " style="top:667px;font-size:23.20px;line-height:26px;left:2673.54px;letter-spacing:0.264px;color:#ffffff;">Explore in API Sessions</div>
<div class="a" style="left:2718.00px;top:972.00px;width:229.20px;height:51.80px;border:1px solid #4f5468;border-radius:7.0px;"></div>
<svg style="left:2737.00px;top:985.60px;" width="26.00" height="25.00" viewBox="0 0 26 25"><g class="ic" stroke="#c6c6c6" stroke-width="2.300"><rect x="9.200" y="8.600" width="14" height="13.400" rx="3"/><path d="M5.800 15.800H5.400a2.800 2.800 0 0 1-2.800-2.800V5.400a2.800 2.800 0 0 1 2.800-2.800h7.600a2.800 2.800 0 0 1 2.800 2.800v.4"/></g></svg>
<div class="t " style="top:985px;font-size:23.20px;line-height:26px;left:2775.64px;letter-spacing:0.067px;color:#c6c6c6;">Copy as cURL</div>
<div class="t mono" style="left:899.00px;top:992px;font-size:21.33px;line-height:25px;"><span style="color:#b4b5b8">GET /?x=%27%20OR%201%3D1 HTTP/1.1</span></div>
<div class="t mono" style="left:899.00px;top:1032px;font-size:21.33px;line-height:25px;"><span style="color:#fdfdfd">VIA: </span><span style="color:#b4b5b8">1.1 google</span></div>
<div class="t mono" style="left:899.00px;top:1062px;font-size:21.33px;line-height:25px;"><span style="color:#fdfdfd">ACCEPT: </span><span style="color:#b4b5b8">*/*</span></div>
<div class="t mono" style="left:899.00px;top:1092px;font-size:21.33px;line-height:25px;"><span style="color:#fdfdfd">HOST: </span><span style="color:#b4b5b8">2.2.2.2.nip.io</span></div>
<div class="t mono" style="left:899.00px;top:1123px;font-size:21.33px;line-height:25px;"><span style="color:#fdfdfd">USER-AGENT: </span><span style="color:#b4b5b8">curl/8.7.1</span></div>
<div class="t mono" style="left:899.00px;top:1153px;font-size:21.33px;line-height:25px;"><span style="color:#fdfdfd">X-FORWARDED-PROTO: </span><span style="color:#b4b5b8">https</span></div>
<div class="t mono" style="left:899.00px;top:1184px;font-size:21.33px;line-height:25px;"><span style="color:#fdfdfd">X-REQUEST-ID: </span><span style="color:#b4b5b8">c52dc489-e873-490e-a167-5496fe45e4b1</span></div>
<div class="t mono" style="left:899.00px;top:1214px;font-size:21.33px;line-height:25px;"><span style="color:#fdfdfd">X-FORWARDED-FOR: </span><span style="color:#b4b5b8">1.1.1.1</span></div>
<div class="t mono" style="left:899.00px;top:1244px;font-size:21.33px;line-height:25px;"><span style="color:#fdfdfd">X-B3-SAMPLED: </span><span style="color:#b4b5b8">0</span></div>
<div class="t mono" style="left:899.00px;top:1275px;font-size:21.33px;line-height:25px;"><span style="color:#fdfdfd">X-ENVOY-ATTEMPT-COUNT: </span><span style="color:#b4b5b8">1</span></div>
<div class="t mono" style="left:899.00px;top:1305px;font-size:21.33px;line-height:25px;"><span style="color:#fdfdfd">X-B3-SPANID: </span><span style="color:#b4b5b8">c2785330de62e2ca</span></div>
<div class="t mono" style="left:899.00px;top:1336px;font-size:21.33px;line-height:25px;"><span style="color:#fdfdfd">X-B3-TRACEID: </span><span style="color:#b4b5b8">1976e8ca1dea31cac2785330de62e2ca</span></div>
<div class="t mono" style="left:899.00px;top:1366px;font-size:21.33px;line-height:25px;"><span style="color:#fdfdfd">X-CLOUD-TRACE-CONTEXT: </span><span style="color:#b4b5b8">23932e8c4ff897b53a14f0abfa4432e5/3113484696245431212</span></div>
</div>
</body>
</html>
